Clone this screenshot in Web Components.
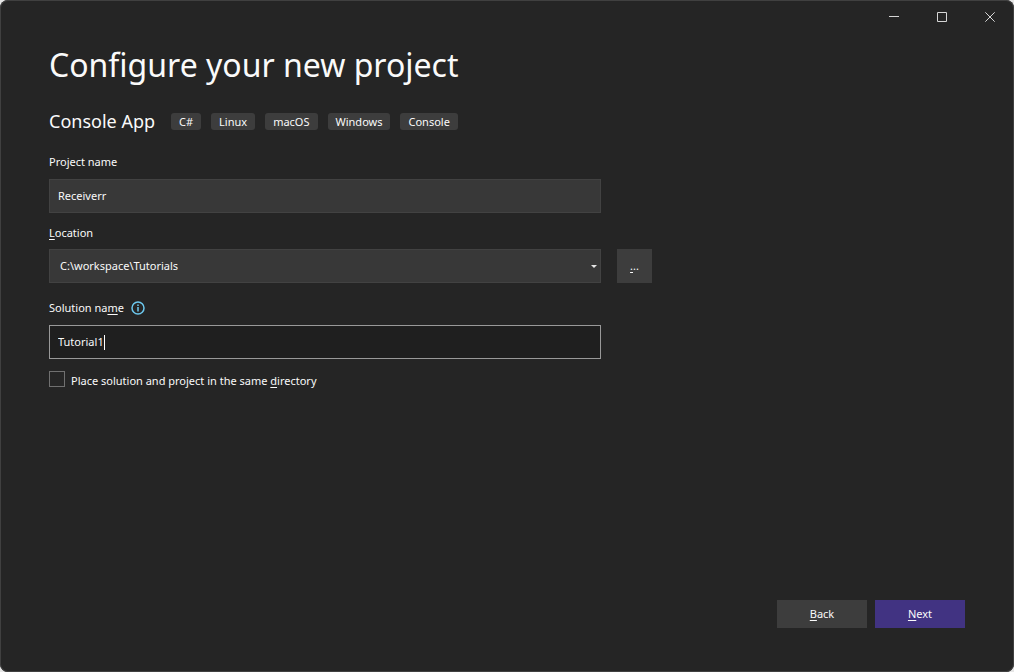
<!DOCTYPE html>
<html lang="en">
<head>
<meta charset="utf-8">
<title>Configure your new project</title>
<style>
  html, body { margin: 0; height: 100%; }
  body {
    background: #e6e6e6;
    color: #fafafa;
    font: 11px/16px "Noto Sans", "Open Sans", sans-serif;
  }
</style>
</head>
<body>
<project-dialog></project-dialog>

<script>
const define = (name, html, setup) => {
  const template = document.createElement('template');
  template.innerHTML = html;
  customElements.define(name, class extends HTMLElement {
    connectedCallback() {
      if (this.shadowRoot) return;
      const root = this.attachShadow({ mode: 'open' });
      root.append(template.content.cloneNode(true));
      if (setup) setup(this, root);
    }
  });
};

define('window-controls', `
  <style>
    :host { display: flex; justify-content: flex-end; }
    button { width: 48px; height: 34px; padding: 0; border: 0; background: none; color: #d6d6d6; display: grid; place-items: center; }
    button:hover { background: #3d3d3d; }
    svg { display: block; fill: none; stroke: currentColor; }
  </style>
  <button aria-label="Minimize"><svg width="10" height="10"><path d="M0 4.5H10"/></svg></button>
  <button aria-label="Maximize"><svg width="10" height="10"><path d="M.5 .5H9.5V9.5H.5Z"/></svg></button>
  <button aria-label="Close"><svg width="10" height="10"><path d="M.3 .3L9.7 9.7M9.7 .3L.3 9.7"/></svg></button>
`);

define('tag-chip', `
  <style>
    :host { display: block; padding: 0 8px; border-radius: 3px; background: #3d3d3d; line-height: 17px; white-space: nowrap; }
  </style>
  <slot></slot>
`);

define('push-button', `
  <style>
    :host { display: block; width: 90px; height: 28px; }
    :host([compact]) { width: 35px; height: 34px; }
    button { width: 100%; height: 100%; padding: 0; border: 0; background: #3d3d3d; color: inherit; font: inherit; }
    :host([primary]) button { background: #413382; }
  </style>
  <button><slot></slot></button>
`);

define('text-field', `
  <style>
    :host { display: block; }
    .head { display: flex; align-items: center; gap: 7px; height: 16px; margin-bottom: 9px; }
    .box { display: flex; align-items: center; box-sizing: border-box; height: 34px; padding: 0 8px; border: 1px solid #424242; background: #383838; }
    input { flex: 1; min-width: 0; padding: 0; border: 0; outline: 0; background: none; color: inherit; font: inherit; }
    .caret { display: none; width: 1px; height: 15px; background: #fff; }
    :host([active]) .box { border-color: #999; background: #1f1f1f; }
    :host([active]) input { flex: none; field-sizing: content; caret-color: transparent; }
    :host([active]) .caret { display: block; }
  </style>
  <div class="head"><label for="field"><slot></slot></label><slot name="hint"></slot></div>
  <div class="box"><input id="field" type="text" spellcheck="false"><span class="caret"></span></div>
`, (host, root) => { root.querySelector('input').value = host.getAttribute('value'); });

define('combo-field', `
  <style>
    :host { display: block; }
    label { display: block; margin-bottom: 8px; }
    .box { display: grid; align-items: center; }
    select, svg { grid-area: 1 / 1; }
    select { appearance: none; box-sizing: border-box; width: 100%; height: 34px; padding: 0 24px 0 10px; border: 1px solid #424242; border-radius: 0; background: #383838; color: inherit; font: inherit; }
    svg { justify-self: end; margin-right: 4px; fill: #e6e6e6; pointer-events: none; }
  </style>
  <label for="field"><slot></slot></label>
  <div class="box">
    <select id="field"><option></option></select>
    <svg width="6" height="3"><path d="M0 0H6L3 3Z"/></svg>
  </div>
`, (host, root) => { root.querySelector('option').textContent = host.getAttribute('value'); });

define('info-icon', `
  <style>
    :host { display: block; width: 14px; height: 14px; }
    svg { display: block; }
  </style>
  <svg width="14" height="14" role="img" aria-label="Information">
    <circle cx="7" cy="7" r="6" fill="none" stroke="#6cc8ee" stroke-width="1.5"/>
    <path d="M7 6V10.5M7 3.5V5" stroke="#6cc8ee" stroke-width="1.5"/>
  </svg>
`);

define('check-option', `
  <style>
    :host { display: block; }
    label { display: flex; align-items: center; gap: 6px; }
    input { appearance: none; box-sizing: border-box; flex: none; width: 16px; height: 16px; margin: 0; border: 1px solid #707070; background: #262626; }
    input:checked { background: #413382; }
    span { padding-top: 4px; }
  </style>
  <label><input type="checkbox"><span><slot></slot></span></label>
`);

define('project-dialog', `
  <style>
    :host { display: flex; flex-direction: column; box-sizing: border-box; min-height: 100%; border-radius: 8px; background: #252525; box-shadow: inset 0 0 0 1px #404040; }
    main { flex: 1; padding: 7px 49px 0; }
    h1 { margin: 0; font-size: 32px; line-height: 48px; font-weight: 400; }
    h2 { margin: 0; font-size: 18px; line-height: 24px; font-weight: 400; }
    .template { display: flex; align-items: center; gap: 16px; margin: 20px 0 21px; }
    .tags { display: flex; gap: 10px; }
    form { display: grid; grid-template-columns: minmax(0, 552px) 35px; column-gap: 16px; align-items: end; }
    .location { margin-top: 12px; }
    .solution { margin-top: 17px; }
    .same { margin-top: 10px; }
    .name, .solution, .same { grid-column: 1 / 2; }
    .location { grid-area: 2 / 1; }
    .browse { grid-area: 2 / 2; }
    footer { display: flex; justify-content: flex-end; gap: 8px; padding: 0 49px 44px; }
    u { text-underline-offset: 2px; text-decoration-skip-ink: none; }
  </style>
  <window-controls></window-controls>
  <main>
    <h1>Configure your new project</h1>
    <div class="template">
      <h2>Console App</h2>
      <div class="tags">
        <tag-chip>C#</tag-chip>
        <tag-chip>Linux</tag-chip>
        <tag-chip>macOS</tag-chip>
        <tag-chip>Windows</tag-chip>
        <tag-chip>Console</tag-chip>
      </div>
    </div>
    <form>
      <text-field class="name" value="Receiverr">Project name</text-field>
      <combo-field class="location" value="C:\\workspace\\Tutorials"><u>L</u>ocation</combo-field>
      <push-button class="browse" compact><u>.</u>..</push-button>
      <text-field class="solution" value="Tutorial1" active>Solution na<u>m</u>e<info-icon slot="hint"></info-icon></text-field>
      <check-option class="same">Place solution and project in the same <u>d</u>irectory</check-option>
    </form>
  </main>
  <footer>
    <push-button><u>B</u>ack</push-button>
    <push-button primary><u>N</u>ext</push-button>
  </footer>
`);
</script>
</body>
</html>
